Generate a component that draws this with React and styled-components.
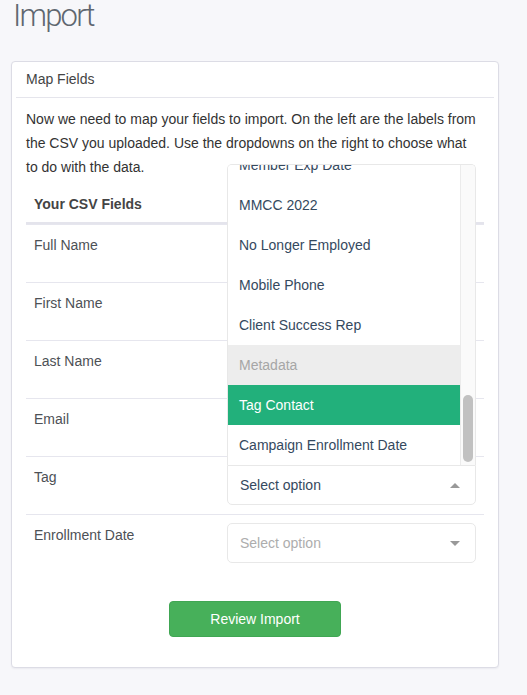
import React from 'react';
import styled, { createGlobalStyle } from 'styled-components';

const Global = createGlobalStyle`
  html, body { margin: 0; padding: 0; background: #f7f7fa; }
  body {
    font-family: "Liberation Sans", Arial, sans-serif;
    font-size: 14px;
    color: #333;
  }
  * { box-sizing: border-box; }
`;

const Page = styled.div`
  width: 527px;
  height: 695px;
  overflow: hidden;
  padding: 0 0 0 11px;
`;

const Title = styled.h1`
  margin: -2px 0 27px 2px;
  height: 36px;
  line-height: 36px;
  font-family: Roboto, "Liberation Sans", sans-serif;
  font-weight: 300;
  font-size: 31px;
  letter-spacing: -1.8px;
  color: #5f6770;
`;

const Panel = styled.section`
  width: 488px;
  background: #fff;
  border: 1px solid #dcdce5;
  border-radius: 4px;
  box-shadow: 0 1px 2px rgba(40, 40, 80, 0.06);
`;

const PanelHeader = styled.div`
  margin: 0 4px;
  padding: 7px 10px 8px;
  line-height: 20px;
  color: #444;
  border-bottom: 1px solid #e5e5ec;
`;

const PanelBody = styled.div`
  padding: 9px 14px 0;
`;

const Intro = styled.p`
  margin: 0 0 7px;
  max-width: 452px;
  line-height: 24px;
  color: #333;
`;

const Row = styled.div`
  display: grid;
  grid-template-columns: 193px 1fr;
  & + & { border-top: 1px solid #e6e6ee; }
`;

const HeadRow = styled(Row)`
  border-bottom: 2px solid #e4e4ec;
`;

const HeadCell = styled.div`
  padding: 8px 8px 8px;
  line-height: 20px;
  font-weight: bold;
  color: #444;
`;

const Cell = styled.div`
  min-height: 57px;
  padding: 8px 8px 9px;
  line-height: 24px;
  color: #4d5156;
`;

const SelectWrap = styled.div`
  position: relative;
`;

const SelectBox = styled.div`
  height: 40px;
  display: flex;
  align-items: center;
  justify-content: space-between;
  padding: 0 15px 0 12px;
  background: #fff;
  border: 1px solid #e8e8e8;
  border-radius: ${p => (p.$open ? '0 0 5px 5px' : '5px')};
  color: ${p => (p.$open ? '#35495e' : '#adadad')};
`;

const Caret = styled.span`
  width: 0;
  height: 0;
  border-left: 5px solid transparent;
  border-right: 5px solid transparent;
  ${p => (p.$up ? 'border-bottom' : 'border-top')}: 5px solid #999;
`;

const Menu = styled.div`
  position: absolute;
  left: 0;
  right: 0;
  bottom: 100%;
  height: 301px;
  display: flex;
  background: #fff;
  border: 1px solid #e8e8e8;
  border-bottom: none;
  border-radius: 5px 5px 0 0;
  overflow: hidden;
  z-index: 5;
`;

const OptionList = styled.div`
  flex: 1;
  overflow: hidden;
`;

const OptionTrack = styled.div`
  margin-top: ${p => -p.$scroll}px;
`;

const Option = styled.div`
  height: 40px;
  line-height: 40px;
  padding: 0 11px;
  white-space: nowrap;
  background: ${p => (p.$kind === 'active' ? '#22b07b' : p.$kind === 'group' ? '#ededed' : '#fff')};
  color: ${p => (p.$kind === 'active' ? '#fff' : p.$kind === 'group' ? '#a6a6a6' : '#35495e')};
`;

const ScrollTrack = styled.div`
  width: 15px;
  background: #fafafa;
  border-left: 1px solid #ebebeb;
  padding: 0 2px 0 2px;
`;

const ScrollThumb = styled.div`
  margin-top: ${p => p.$top}px;
  height: ${p => p.$size}px;
  border-radius: 5px;
  background: #c1c1c1;
`;

const Footer = styled.div`
  display: flex;
  justify-content: center;
  padding: 29px 0 30px;
`;

const Button = styled.button`
  width: 172px;
  height: 36px;
  border: 1px solid #40a653;
  border-radius: 4px;
  background: #47b05a;
  color: #fff;
  font-family: "Liberation Sans", Arial, sans-serif;
  font-size: 14px;
  cursor: pointer;
`;

const fields = ['Full Name', 'First Name', 'Last Name', 'Email', 'Tag', 'Enrollment Date'];

const options = [
  { label: 'Member Exp Date' },
  { label: 'MMCC 2022' },
  { label: 'No Longer Employed' },
  { label: 'Mobile Phone' },
  { label: 'Client Success Rep' },
  { label: 'Metadata', kind: 'group' },
  { label: 'Tag Contact', kind: 'active' },
  { label: 'Campaign Enrollment Date' },
];

function Select({ open, value }) {
  return (
    <SelectWrap>
      {open && (
        <Menu>
          <OptionList>
            <OptionTrack $scroll={20}>
              {options.map(o => (
                <Option key={o.label} $kind={o.kind}>{o.label}</Option>
              ))}
            </OptionTrack>
          </OptionList>
          <ScrollTrack>
            <ScrollThumb $top={230} $size={67} />
          </ScrollTrack>
        </Menu>
      )}
      <SelectBox $open={open}>
        <span>{value}</span>
        <Caret $up={open} />
      </SelectBox>
    </SelectWrap>
  );
}

export default function App() {
  return (
    <>
      <Global />
      <Page>
        <Title>Import</Title>
        <Panel>
          <PanelHeader>Map Fields</PanelHeader>
          <PanelBody>
            <Intro>
              Now we need to map your fields to import. On the left are the labels from the CSV you
              uploaded. Use the dropdowns on the right to choose what to do with the data.
            </Intro>
            <HeadRow>
              <HeadCell>Your CSV Fields</HeadCell>
              <HeadCell />
            </HeadRow>
            {fields.map(f => (
              <Row key={f}>
                <Cell>{f}</Cell>
                <Cell>
                  {f === 'Tag' && <Select open value="Select option" />}
                  {f === 'Enrollment Date' && <Select value="Select option" />}
                </Cell>
              </Row>
            ))}
            <Footer>
              <Button>Review Import</Button>
            </Footer>
          </PanelBody>
        </Panel>
      </Page>
    </>
  );
}
